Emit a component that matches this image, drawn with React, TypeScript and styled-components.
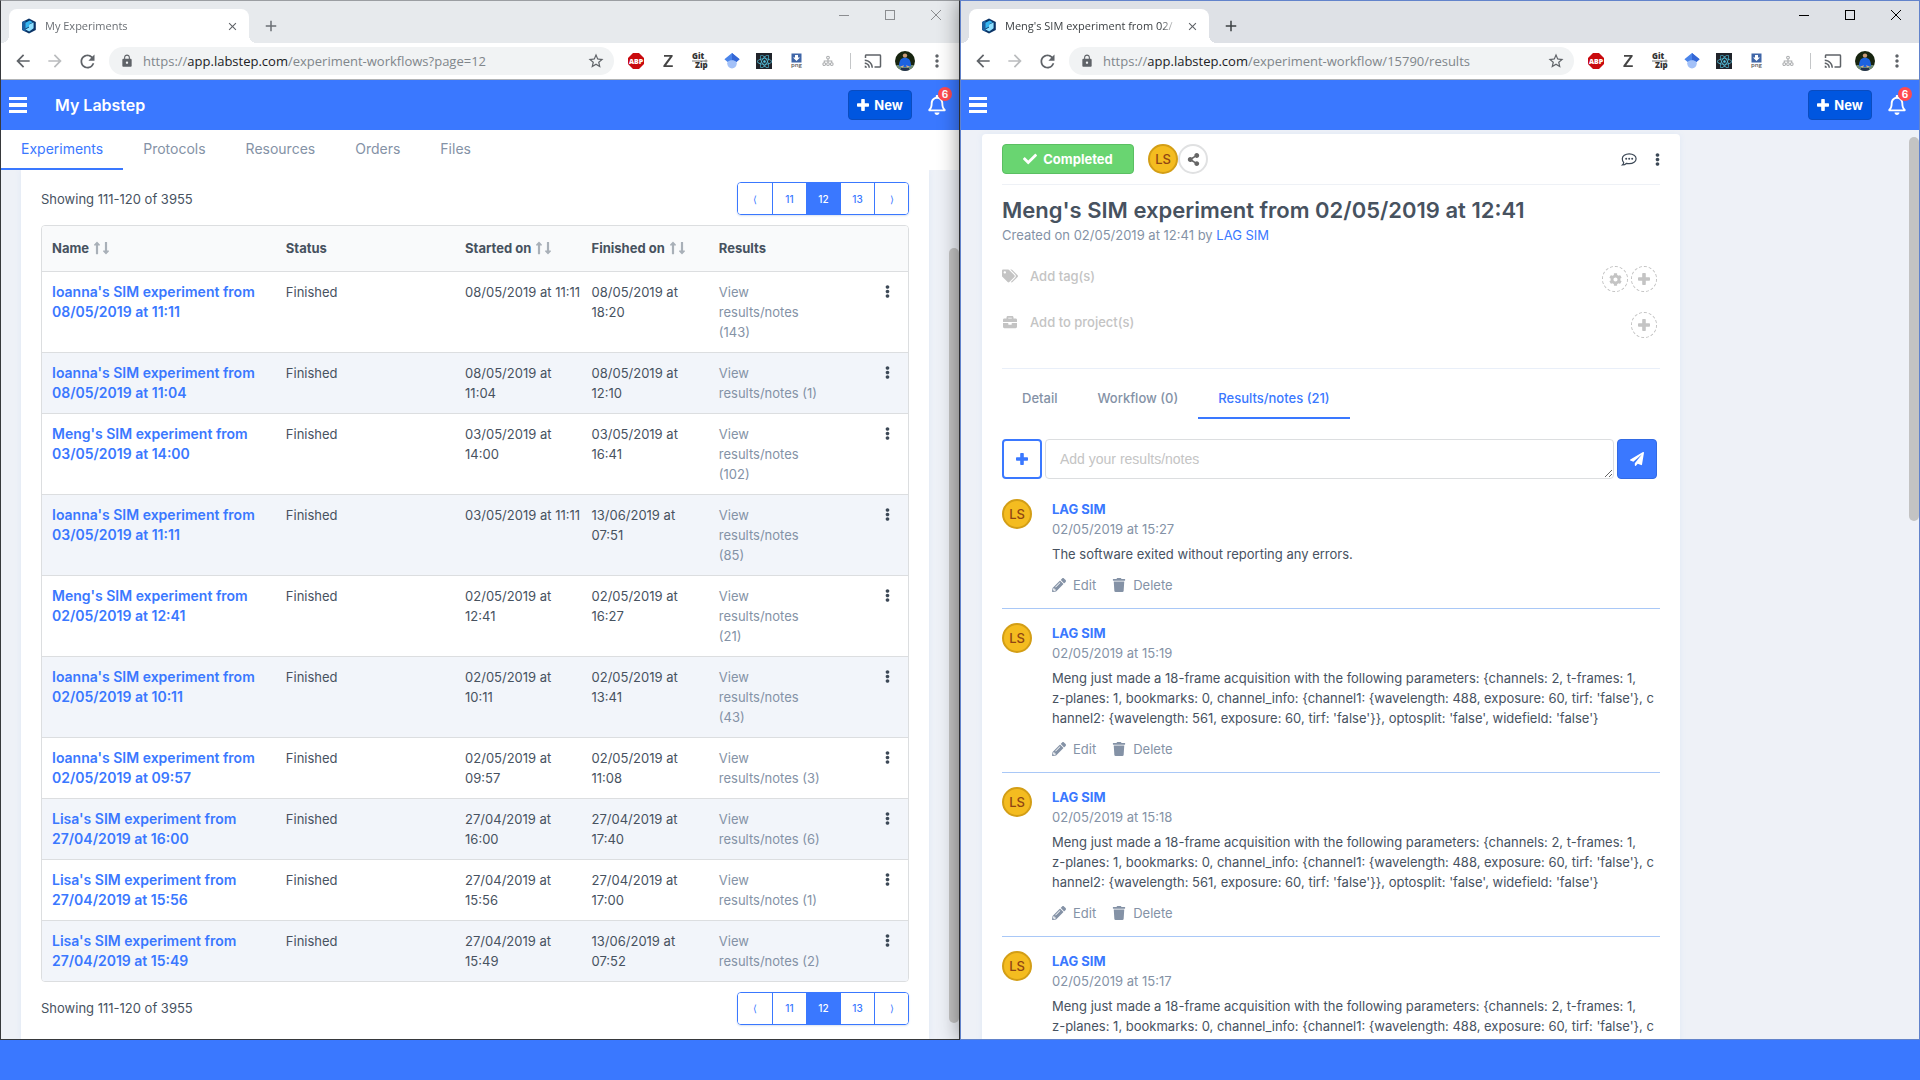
import React from "react";
import styled, { createGlobalStyle, css } from "styled-components";
import {
  FaCheck,
  FaShareAlt,
  FaEllipsisV,
  FaTags,
  FaBriefcase,
  FaCog,
  FaPencilAlt,
  FaTrash,
  FaPaperPlane,
  FaRegBell,
  FaLongArrowAltUp,
  FaLongArrowAltDown,
  FaReact,
} from "react-icons/fa";
import {
  MdArrowBack,
  MdArrowForward,
  MdRefresh,
  MdLock,
  MdStarBorder,
  MdCast,
  MdMoreVert,
  MdClose,
  MdAdd,
} from "react-icons/md";

const color = {
  blue: "#3a78ff",
  deepBlue: "#0056e0",
  text: "#47525f",
  muted: "#8492a6",
  faint: "#c4c4c4",
  page: "#eef1f7",
  stripe: "#f2f5fa",
  line: "#dcdee0",
};

const appFont = `Inter, "Liberation Sans", sans-serif`;
const chromeFont = `"Open Sans", "Noto Sans", sans-serif`;

const GlobalStyle = createGlobalStyle`
  *, *::before, *::after { box-sizing: border-box; }
  body { margin: 0; overflow: hidden; font-family: ${appFont}; font-size: 13px; line-height: 20px; color: ${color.text}; }
  button { font: inherit; color: inherit; margin: 0; padding: 0; border: 0; background: none; cursor: pointer; }
  a { color: inherit; text-decoration: none; }
  svg { display: block; flex: none; overflow: visible; }
`;

/* ---------- Desktop and windows ---------- */

const Desktop = styled.div`
  display: grid;
  grid-template-columns: 1fr 1fr;
  grid-template-rows: minmax(0, 1fr) 40px;
  height: 100vh;
  background: ${color.blue};
`;

const Taskbar = styled.div`
  grid-column: 1 / -1;
  background: ${color.blue};
  z-index: 2;
`;

const WindowFrame = styled.section<{ $active?: boolean }>`
  display: flex;
  flex-direction: column;
  min-width: 0;
  min-height: 0;
  background: #fff;
  border: 1px solid ${(p) => (p.$active ? "#6283cb" : "#37393c")};
  border-top-color: ${(p) => (p.$active ? "#6283cb" : "#9b9ea2")};
  ${(p) =>
    p.$active &&
    css`
      z-index: 1;
      box-shadow: 0 0 20px rgba(0, 0, 0, 0.45);
    `}
`;

/* ---------- Browser chrome ---------- */

const TabStrip = styled.div<{ $active?: boolean }>`
  display: flex;
  align-items: flex-start;
  height: 42px;
  padding-left: 8px;
  font-family: ${chromeFont};
  font-size: 11px;
  background: ${(p) => (p.$active ? "#dee1e6" : "#e7eaed")};
  color: ${(p) => (p.$active ? "#3c4043" : "#6b6f74")};
`;

const flare = css`
  content: "";
  position: absolute;
  bottom: 0;
  width: 8px;
  height: 8px;
`;

const BrowserTab = styled.div`
  position: relative;
  display: flex;
  align-items: center;
  gap: 8px;
  width: 240px;
  height: 34px;
  margin-top: 8px;
  padding: 0 10px 0 12px;
  border-radius: 8px 8px 0 0;
  background: #fff;
  &::before {
    ${flare}
    left: -8px;
    background: radial-gradient(circle at 0 0, transparent 8px, #fff 8px);
  }
  &::after {
    ${flare}
    right: -8px;
    background: radial-gradient(circle at 100% 0, transparent 8px, #fff 8px);
  }
`;

const TabTitle = styled.span`
  flex: 1;
  min-width: 0;
  overflow: hidden;
  white-space: nowrap;
  mask-image: linear-gradient(to right, #000 90%, transparent);
`;

const TabClose = styled.button`
  color: #5f6368;
`;

const NewTab = styled.button`
  display: grid;
  place-items: center;
  width: 28px;
  height: 34px;
  margin: 8px 0 0 8px;
`;

const WindowControls = styled.div<{ $active?: boolean }>`
  display: flex;
  margin-left: auto;
  color: ${(p) => (p.$active ? "#000" : "#8b8d90")};
`;

const WindowControl = styled.button`
  display: grid;
  place-items: center;
  width: 46px;
  height: 28px;
`;

const Toolbar = styled.div`
  display: flex;
  align-items: center;
  height: 37px;
  padding-right: 6px;
  border-bottom: 1px solid #b2b4b6;
  font-family: ${chromeFont};
  color: #5f6368;
`;

const ToolButton = styled.button<{ $dim?: boolean }>`
  display: grid;
  place-items: center;
  width: 32px;
  height: 32px;
  color: ${(p) => (p.$dim ? "#babcbe" : "#5f6368")};
`;

const NavButtons = styled.div`
  display: flex;
  padding: 0 6px;
`;

const AddressBar = styled.div`
  display: flex;
  align-items: center;
  flex: 1;
  min-width: 0;
  height: 28px;
  margin-right: 6px;
  padding: 0 9px 0 11px;
  border-radius: 14px;
  background: #f1f3f4;
`;

const UrlText = styled.span`
  flex: 1;
  min-width: 0;
  margin-left: 9px;
  overflow: hidden;
  white-space: nowrap;
  font-size: 13px;
  color: #80868b;
  b {
    font-weight: 400;
    color: #202124;
  }
`;

const Divider = styled.span`
  width: 1px;
  height: 16px;
  margin: 0 6px;
  background: #c4c6c8;
`;

const Favicon = () => (
  <svg width="16" height="16" viewBox="0 0 16 16" aria-hidden="true">
    <path d="M8 .4 14.8 4v8L8 15.6 1.2 12V4z" fill="#0b3467" />
    <path d="M1.2 4 4.6 2.3v11.4L1.2 12z" fill="#1b5f9f" />
    <path d="M4.4 4.8 8.8 2.6l3 1.6-3.8 2v2.6l-3.6 1.8z" fill="#35b5f0" />
    <path d="m8 6.4 4.6-2v5.8L8.2 13.4l-3.8-2L8 9.4z" fill="#8fe0ff" />
  </svg>
);

const ExtAdblock = () => (
  <svg width="16" height="16" viewBox="0 0 16 16" aria-hidden="true">
    <path d="M5 0h6l5 5v6l-5 5H5l-5-5V5z" fill="#c90a0e" />
    <text x="8" y="11" textAnchor="middle" fontFamily="Open Sans" fontWeight="800" fontSize="7" fill="#fff">ABP</text>
  </svg>
);

const ExtZotero = () => (
  <svg width="16" height="16" viewBox="0 0 16 16" fill="#454545" aria-hidden="true">
    <path d="M4 2h8.600v1.600L6.200 12.200h6.600V14H3.400v-1.600L9.900 3.800H4z" />
  </svg>
);

const ExtGitZip = () => (
  <svg width="18" height="18" viewBox="0 0 18 18" aria-hidden="true">
    <text x="1" y="7" fontFamily="Open Sans" fontWeight="800" fontSize="8" fill="#333">Git</text>
    <text x="4" y="16" fontFamily="Open Sans" fontWeight="800" fontSize="8" fill="#333">Zip</text>
    <path d="M1 9h13" stroke="#777" />
    <circle cx="15" cy="9" r="1" fill="none" stroke="#777" />
  </svg>
);

const ExtScholar = () => (
  <svg width="16" height="16" viewBox="0 0 16 16" aria-hidden="true">
    <circle cx="8" cy="10.6" r="4.8" fill="#a3c1f8" />
    <path d="M8 0 15.6 6.2 12.4 9C11 6.6 5 6.6 3.6 9L.4 6.2z" fill="#4a84ea" />
    <path d="M8 0 15.6 6.2 12.4 9C11.6 7.4 9.6 7 8 7z" fill="#3467d6" />
  </svg>
);

const ReactBadge = styled.span`
  display: grid;
  place-items: center;
  width: 16px;
  height: 16px;
  background: #20232a;
  color: #53c1de;
`;

const ExtPng = () => (
  <svg width="16" height="16" viewBox="0 0 16 16" aria-hidden="true">
    <rect x="3.5" y=".5" width="10" height="9" fill="#3f66a8" />
    <path d="M7 2h3v2.6h2L8.5 8 5 4.6h2z" fill="#fff" />
    <text x="8.5" y="14" textAnchor="middle" fontFamily="Open Sans" fontWeight="600" fontSize="6" fill="#555">png</text>
  </svg>
);

const ExtTree = () => (
  <svg width="12" height="12" viewBox="0 0 14 14" fill="none" stroke="#a9abad" strokeWidth="1.200" aria-hidden="true">
    <circle cx="7" cy="3" r="1.6" />
    <path d="M7 4.6V9M2.6 9V7h8.8v2" />
    <circle cx="2.6" cy="10.6" r="1.6" />
    <circle cx="7" cy="10.6" r="1.6" />
    <circle cx="11.4" cy="10.6" r="1.6" />
  </svg>
);

const ProfilePhoto = ({ id }: { id: string }) => (
  <svg width="20" height="20" viewBox="0 0 20 20" aria-hidden="true">
    <clipPath id={id}>
      <circle cx="10" cy="10" r="10" />
    </clipPath>
    <g clipPath={`url(#${id})`}>
      <rect width="20" height="20" fill="#17240f" />
      <rect y="14" width="20" height="6" fill="#6c8a73" />
      <circle cx="10" cy="4.600" r="2.2" fill="#c99a78" />
      <path d="M4 15c0-6 2.500-8.200 6-8.200s6 2.200 6 8.200l-3 1H7z" fill="#1d62e0" />
      <path d="M5 15.500l4-1.200L8 16.500zM15 15.500l-4-1.200L12 16.500z" fill="#d8ab8b" />
      <path d="M6 17h8v3H6z" fill="#24314f" />
    </g>
  </svg>
);

type ChromeProps = { id: string; title: string; host: string; path: string; active?: boolean };

const BrowserChrome = ({ id, title, host, path, active }: ChromeProps) => (
  <>
    <TabStrip $active={active}>
      <BrowserTab>
        <Favicon />
        <TabTitle>{title}</TabTitle>
        <TabClose aria-label="Close tab">
          <MdClose size={13} />
        </TabClose>
      </BrowserTab>
      <NewTab aria-label="New tab">
        <MdAdd size={18} />
      </NewTab>
      <WindowControls $active={active}>
        <WindowControl aria-label="Minimise">
          <svg width="10" height="10" stroke="currentColor"><path d="M0 5.500H10" /></svg>
        </WindowControl>
        <WindowControl aria-label="Maximise">
          <svg width="10" height="10" stroke="currentColor" fill="none"><rect x=".5" y=".5" width="9" height="9" /></svg>
        </WindowControl>
        <WindowControl aria-label="Close">
          <svg width="10" height="10" stroke="currentColor"><path d="M0 0 10 10M10 0 0 10" /></svg>
        </WindowControl>
      </WindowControls>
    </TabStrip>
    <Toolbar>
      <NavButtons>
        <ToolButton aria-label="Back"><MdArrowBack size={20} /></ToolButton>
        <ToolButton aria-label="Forward" $dim><MdArrowForward size={20} /></ToolButton>
        <ToolButton aria-label="Reload"><MdRefresh size={21} /></ToolButton>
      </NavButtons>
      <AddressBar>
        <MdLock size={14} />
        <UrlText>https://<b>{host}</b>{path}</UrlText>
        <MdStarBorder size={18} />
      </AddressBar>
      <ToolButton aria-label="Adblock"><ExtAdblock /></ToolButton>
      <ToolButton aria-label="Zotero"><ExtZotero /></ToolButton>
      <ToolButton aria-label="GitZip"><ExtGitZip /></ToolButton>
      <ToolButton aria-label="Scholar"><ExtScholar /></ToolButton>
      <ToolButton aria-label="React tools"><ReactBadge><FaReact size={15} /></ReactBadge></ToolButton>
      <ToolButton aria-label="Save as png"><ExtPng /></ToolButton>
      <ToolButton aria-label="Site map"><ExtTree /></ToolButton>
      <Divider />
      <ToolButton aria-label="Cast"><MdCast size={18} /></ToolButton>
      <ToolButton aria-label="Profile"><ProfilePhoto id={id} /></ToolButton>
      <ToolButton aria-label="Menu"><MdMoreVert size={20} /></ToolButton>
    </Toolbar>
  </>
);

/* ---------- Labstep header ---------- */

const AppHeader = styled.header`
  display: flex;
  align-items: center;
  height: 50px;
  padding: 0 13px 0 8px;
  background: ${color.blue};
  color: #fff;
`;

const AppTitle = styled.h1`
  flex: 1;
  margin: 0 0 0 28px;
  font-size: 16px;
  font-weight: 600;
`;

const NewButton = styled.button`
  display: flex;
  align-items: center;
  justify-content: center;
  gap: 5px;
  width: 64px;
  height: 30px;
  border: 1px solid #0a4cc0;
  border-radius: 4px;
  background: ${color.deepBlue};
  font-weight: 700;
`;

const BellButton = styled.button`
  position: relative;
  margin-left: 16px;
  svg { width: 18px; height: 20px; }
`;

const Badge = styled.span`
  position: absolute;
  top: -8px;
  right: -6px;
  width: 14px;
  height: 14px;
  border-radius: 7px;
  background: #ff4a4f;
  font-size: 10px;
  font-weight: 700;
  line-height: 14px;
  text-align: center;
`;

const PlusIcon = () => (
  <svg width="12" height="12" viewBox="0 0 12 12" fill="currentColor" aria-hidden="true">
    <rect x="4.200" width="3.600" height="12" rx=".8" />
    <rect y="4.200" width="12" height="3.600" rx=".8" />
  </svg>
);

const LabstepHeader = ({ title }: { title?: string }) => (
  <AppHeader>
    <button aria-label="Open menu">
      <svg width="18" height="18" fill="#fff"><path d="M0 1h18v3H0zM0 7h18v4H0zM0 14h18v3H0z" /></svg>
    </button>
    <AppTitle>{title}</AppTitle>
    <NewButton><PlusIcon />New</NewButton>
    <BellButton aria-label="Notifications">
      <FaRegBell />
      <Badge>6</Badge>
    </BellButton>
  </AppHeader>
);

/* ---------- Shared app parts ---------- */

const Tabs = styled.nav<{ $inner?: boolean }>`
  display: flex;
  margin-top: ${(p) => (p.$inner ? "10px" : "0")};
  background: #fff;
  font-size: ${(p) => (p.$inner ? "13px" : "14px")};
  font-weight: ${(p) => (p.$inner ? 500 : 400)};
`;

const TabLink = styled.a<{ $current?: boolean }>`
  height: 40px;
  padding: 9px 20px;
  border-bottom: 2px solid ${(p) => (p.$current ? color.blue : "transparent")};
  color: ${(p) => (p.$current ? color.blue : color.muted)};
`;

const Viewport = styled.main<{ $top: number }>`
  position: relative;
  flex: 1;
  min-height: 0;
  overflow: hidden;
  padding: ${(p) => p.$top}px 30px 0 20px;
  background: ${color.page};
`;

const Scrollbar = styled.span<{ $top: string; $bottom: string }>`
  position: absolute;
  top: ${(p) => p.$top};
  bottom: ${(p) => p.$bottom};
  right: 0;
  width: 10px;
  border-radius: 5px;
  background: #c3c3c3;
`;

const Card = styled.div<{ $narrow?: boolean }>`
  min-height: 100%;
  max-width: ${(p) => (p.$narrow ? "698px" : "none")};
  margin-left: ${(p) => (p.$narrow ? "1px" : "0")};
  padding: ${(p) => (p.$narrow ? "10px 20px" : "12px 20px")};
  border-radius: ${(p) => (p.$narrow ? "4px" : "0")};
  background: #fff;
  box-shadow: 0 0 6px #dfe8f6;
`;

/* ---------- Experiments list ---------- */

const ListBar = styled.div`
  display: flex;
  align-items: center;
  justify-content: space-between;
`;

const Pager = styled.nav`
  display: flex;
  height: 33px;
  border: 1px solid ${color.blue};
  border-radius: 4px;
  overflow: hidden;
  box-shadow: 0 1px 2px #dbe3f0;
`;

const PageButton = styled.button<{ $current?: boolean }>`
  width: 34px;
  font-size: 10px;
  font-weight: 500;
  color: ${(p) => (p.$current ? "#fff" : color.blue)};
  background: ${(p) => (p.$current ? color.blue : "#fff")};
  & + & {
    border-left: 1px solid ${(p) => (p.$current ? color.blue : "#e4e6e9")};
  }
`;

const TableFrame = styled.div`
  margin: 10px 0;
  border: 1px solid ${color.line};
  border-radius: 4px;
  overflow: hidden;
`;

const Table = styled.table`
  width: 100%;
  table-layout: fixed;
  border-collapse: collapse;
`;

const Th = styled.th<{ $share: string }>`
  width: ${(p) => p.$share};
  height: 45px;
  padding: 0 10px;
  border-bottom: 1px solid ${color.line};
  background: #f9fafb;
  text-align: left;
  font-weight: 700;
  white-space: nowrap;
`;

const SortIcons = styled.span`
  display: inline-flex;
  gap: 1px;
  margin-left: 4px;
  vertical-align: -2px;
  color: #a9b0b8;
  svg { width: 8px; height: 14px; }
`;

const Row = styled.tr`
  &:nth-child(even) {
    background: ${color.stripe};
  }
  & + & td {
    border-top: 1px solid ${color.line};
  }
`;

const Td = styled.td<{ $muted?: boolean; $end?: boolean }>`
  padding: 10px;
  padding-right: ${(p) => (p.$end ? "18px" : "0")};
  vertical-align: top;
  white-space: pre;
  text-align: ${(p) => (p.$end ? "right" : "left")};
  color: ${(p) => (p.$muted ? color.muted : color.text)};
`;

const NameLink = styled.a`
  font-size: 14px;
  font-weight: 600;
  color: ${color.blue};
`;

const DotsButton = styled.button`
  display: inline-flex;
  align-items: center;
  height: 20px;
  vertical-align: top;
  color: #3c4856;
  svg { width: 5px; height: 13px; }
`;

const Pagination = () => (
  <ListBar>
    <span>Showing 111-120 of 3955</span>
    <Pager aria-label="Pages">
      <PageButton>⟨</PageButton>
      <PageButton>11</PageButton>
      <PageButton $current>12</PageButton>
      <PageButton>13</PageButton>
      <PageButton>⟩</PageButton>
    </Pager>
  </ListBar>
);

const Sort = () => (
  <SortIcons>
    <FaLongArrowAltUp />
    <FaLongArrowAltDown />
  </SortIcons>
);

const experiments: [string, string, string, string, string, string][] = [
  ["Ioanna's", "08/05/2019", "11:11", "08/05/2019", "18:20", "143"],
  ["Ioanna's", "08/05/2019", "11:04", "08/05/2019", "12:10", "1"],
  ["Meng's", "03/05/2019", "14:00", "03/05/2019", "16:41", "102"],
  ["Ioanna's", "03/05/2019", "11:11", "13/06/2019", "07:51", "85"],
  ["Meng's", "02/05/2019", "12:41", "02/05/2019", "16:27", "21"],
  ["Ioanna's", "02/05/2019", "10:11", "02/05/2019", "13:41", "43"],
  ["Ioanna's", "02/05/2019", "09:57", "02/05/2019", "11:08", "3"],
  ["Lisa's", "27/04/2019", "16:00", "27/04/2019", "17:40", "6"],
  ["Lisa's", "27/04/2019", "15:56", "27/04/2019", "17:00", "1"],
  ["Lisa's", "27/04/2019", "15:49", "13/06/2019", "07:52", "2"],
];

const ExperimentTable = () => (
  <TableFrame>
    <Table>
      <thead>
        <tr>
          <Th $share="27%">Name<Sort /></Th>
          <Th $share="20.7%">Status</Th>
          <Th $share="14.6%">Started on<Sort /></Th>
          <Th $share="14.7%">Finished on<Sort /></Th>
          <Th $share="15%">Results</Th>
          <Th $share="8%" aria-label="Actions" />
        </tr>
      </thead>
      <tbody>
        {experiments.map(([who, day, time, endDay, endTime, notes]) => (
          <Row key={day + time}>
            <Td><NameLink href="#">{`${who} SIM experiment from\n${day} at ${time}`}</NameLink></Td>
            <Td>Finished</Td>
            <Td>{`${day} at${time === "11:11" ? " " : "\n"}${time}`}</Td>
            <Td>{`${endDay} at\n${endTime}`}</Td>
            <Td $muted><a href="#">{`View\nresults/notes${notes.length > 1 ? "\n" : " "}(${notes})`}</a></Td>
            <Td $end><DotsButton aria-label="More"><FaEllipsisV /></DotsButton></Td>
          </Row>
        ))}
      </tbody>
    </Table>
  </TableFrame>
);

/* ---------- Experiment detail ---------- */

const DetailBar = styled.div`
  display: flex;
  align-items: center;
  padding-bottom: 10px;
  border-bottom: 1px solid #eef1f6;
`;

const StatusButton = styled.button`
  display: flex;
  align-items: center;
  justify-content: center;
  gap: 6px;
  width: 132px;
  height: 30px;
  margin-right: 14px;
  border: 1px solid #5abf62;
  border-radius: 4px;
  background: #69d571;
  color: #fff;
  font-weight: 700;
`;

const Avatar = styled.span`
  flex: none;
  width: 30px;
  height: 30px;
  border: 2px solid #d39e16;
  border-radius: 50%;
  background: #f4bc20;
  color: #8f4513;
  font-size: 13px;
  font-weight: 500;
  line-height: 26px;
  text-align: center;
`;

const ShareButton = styled.button`
  display: grid;
  place-items: center;
  width: 30px;
  height: 30px;
  border: 2px solid #e0e1e2;
  border-radius: 50%;
  color: #666;
`;

const BarActions = styled.div`
  display: flex;
  align-items: center;
  gap: 18px;
  margin-left: auto;
  color: #3c4856;
`;

const Title = styled.h2`
  margin: 10px 0 0;
  font-size: 22px;
  font-weight: 600;
  line-height: 30px;
  white-space: nowrap;
`;

const Created = styled.p`
  margin: 0;
  color: ${color.muted};
  a { color: ${color.blue}; }
`;

const FieldList = styled.div`
  display: grid;
  gap: 20px;
  margin-top: 21px;
  padding-bottom: 30px;
  border-bottom: 1px solid #e9eff9;
`;

const Field = styled.div`
  display: flex;
  align-items: flex-start;
  gap: 3px;
  height: 26px;
  padding-right: 3px;
  color: ${color.faint};
  font-weight: 500;
`;

const FieldIcon = styled.span`
  display: grid;
  place-items: center;
  width: 16px;
  height: 20px;
  margin-right: 9px;
`;

const FieldLabel = styled.span`
  flex: 1;
`;

const RoundButton = styled.button`
  display: grid;
  place-items: center;
  width: 26px;
  height: 26px;
  border: 1px dashed #c0c0c0;
  border-radius: 50%;
`;

const Composer = styled.form`
  display: flex;
  gap: 3px;
  margin: 20px 0;
  padding-right: 3px;
`;

const SquareButton = styled.button<{ $solid?: boolean }>`
  display: grid;
  place-items: center;
  flex: none;
  width: 40px;
  height: 40px;
  border: ${(p) => (p.$solid ? "1px solid #326ae4" : `2px solid ${color.blue}`)};
  border-radius: 4px;
  background: ${(p) => (p.$solid ? color.blue : "#fff")};
  color: ${(p) => (p.$solid ? "#fff" : color.blue)};
`;

const NoteBox = styled.textarea`
  flex: 1;
  min-width: 0;
  height: 40px;
  padding: 9px 14px;
  border: 1px solid ${color.line};
  border-radius: 4px;
  outline: 0;
  overflow: hidden;
  font-family: "Liberation Sans", sans-serif;
  font-size: 14px;
  line-height: 20px;
  &::placeholder { color: ${color.faint}; }
`;

const CommentList = styled.div`
  display: grid;
  gap: 14px;
`;

const CommentItem = styled.article`
  display: flex;
  gap: 20px;
  padding-bottom: 13px;
  border-bottom: 1px solid #a9c8f7;
`;

const CommentBody = styled.div`
  flex: 1;
  min-width: 0;
`;

const Author = styled.a`
  display: block;
  font-weight: 700;
  color: ${color.blue};
`;

const CommentDate = styled.div`
  color: ${color.muted};
`;

const CommentText = styled.p`
  margin: 5px 0 11px;
  white-space: pre;
`;

const CommentActions = styled.div`
  display: flex;
  gap: 16px;
`;

const TextButton = styled.button`
  display: flex;
  align-items: center;
  gap: 7px;
  color: ${color.muted};
`;

const ChatIcon = () => (
  <svg width="16" height="13" viewBox="0 0 16 13" aria-hidden="true">
    <path
      d="M8.200 .8c3.900 0 6.900 2.100 6.900 4.900s-3 4.900-6.900 4.900c-.9 0-1.700-.1-2.500-.3-1 .9-2.500 1.700-4.300 1.700.8-.7 1.200-1.600 1.300-2.500C1.700 8.600 1.300 7.200 1.300 5.700 1.300 2.900 4.300.8 8.200.8z"
      fill="none"
      stroke="#3c4856"
      strokeWidth="1.200"
    />
    <circle cx="5.200" cy="5.700" r="1" fill="#3c4856" />
    <circle cx="8.200" cy="5.700" r="1" fill="#3c4856" />
    <circle cx="11.200" cy="5.700" r="1" fill="#3c4856" />
  </svg>
);

const acquisition =
  "Meng just made a 18-frame acquisition with the following parameters: {channels: 2, t-frames: 1,\n" +
  "z-planes: 1, bookmarks: 0, channel_info: {channel1: {wavelength: 488, exposure: 60, tirf: 'false'}, c\n" +
  "hannel2: {wavelength: 561, exposure: 60, tirf: 'false'}}, optosplit: 'false', widefield: 'false'}";

const comments = [
  { time: "15:27", text: "The software exited without reporting any errors." },
  { time: "15:19", text: acquisition },
  { time: "15:18", text: acquisition },
  { time: "15:17", text: acquisition },
];

const Comment = ({ time, text }: { time: string; text: string }) => (
  <CommentItem>
    <Avatar>LS</Avatar>
    <CommentBody>
      <Author href="#">LAG SIM</Author>
      <CommentDate>02/05/2019 at {time}</CommentDate>
      <CommentText>{text}</CommentText>
      <CommentActions>
        <TextButton><FaPencilAlt size={14} />Edit</TextButton>
        <TextButton><FaTrash size={14} />Delete</TextButton>
      </CommentActions>
    </CommentBody>
  </CommentItem>
);

export default function App() {
  return (
    <>
      <GlobalStyle />
      <Desktop>
        <WindowFrame>
          <BrowserChrome id="photo-a" title="My Experiments" host="app.labstep.com" path="/experiment-workflows?page=12" />
          <LabstepHeader title="My Labstep" />
          <Tabs>
            <TabLink href="#" $current>Experiments</TabLink>
            <TabLink href="#">Protocols</TabLink>
            <TabLink href="#">Resources</TabLink>
            <TabLink href="#">Orders</TabLink>
            <TabLink href="#">Files</TabLink>
          </Tabs>
          <Viewport $top={0}>
            <Card>
              <Pagination />
              <ExperimentTable />
              <Pagination />
            </Card>
            <Scrollbar $top="9%" $bottom="16px" />
          </Viewport>
        </WindowFrame>

        <WindowFrame $active>
          <BrowserChrome id="photo-b" title="Meng's SIM experiment from 02/" host="app.labstep.com" path="/experiment-workflow/15790/results" active />
          <LabstepHeader />
          <Viewport $top={4}>
            <Card $narrow>
              <DetailBar>
                <StatusButton><FaCheck size={14} />Completed</StatusButton>
                <Avatar>LS</Avatar>
                <ShareButton aria-label="Share"><FaShareAlt size={13} /></ShareButton>
                <BarActions>
                  <button aria-label="Comments"><ChatIcon /></button>
                  <DotsButton aria-label="More"><FaEllipsisV /></DotsButton>
                </BarActions>
              </DetailBar>
              <Title>Meng's SIM experiment from 02/05/2019 at 12:41</Title>
              <Created>Created on 02/05/2019 at 12:41 by <a href="#">LAG SIM</a></Created>
              <FieldList>
                <Field>
                  <FieldIcon><FaTags size={16} /></FieldIcon>
                  <FieldLabel>Add tag(s)</FieldLabel>
                  <RoundButton aria-label="Tag settings"><FaCog size={13} /></RoundButton>
                  <RoundButton aria-label="Add tag"><PlusIcon /></RoundButton>
                </Field>
                <Field>
                  <FieldIcon><FaBriefcase size={14} /></FieldIcon>
                  <FieldLabel>Add to project(s)</FieldLabel>
                  <RoundButton aria-label="Add to project"><PlusIcon /></RoundButton>
                </Field>
              </FieldList>
              <Tabs $inner>
                <TabLink href="#">Detail</TabLink>
                <TabLink href="#">Workflow (0)</TabLink>
                <TabLink href="#" $current>Results/notes (21)</TabLink>
              </Tabs>
              <Composer>
                <SquareButton type="button" aria-label="Attach"><PlusIcon /></SquareButton>
                <NoteBox aria-label="Add your results/notes" placeholder="Add your results/notes" />
                <SquareButton type="button" $solid aria-label="Send"><FaPaperPlane size={14} /></SquareButton>
              </Composer>
              <CommentList>
                {comments.map((c) => (
                  <Comment key={c.time} {...c} />
                ))}
              </CommentList>
            </Card>
            <Scrollbar $top="7px" $bottom="57%" />
          </Viewport>
        </WindowFrame>
        <Taskbar />
      </Desktop>
    </>
  );
}
